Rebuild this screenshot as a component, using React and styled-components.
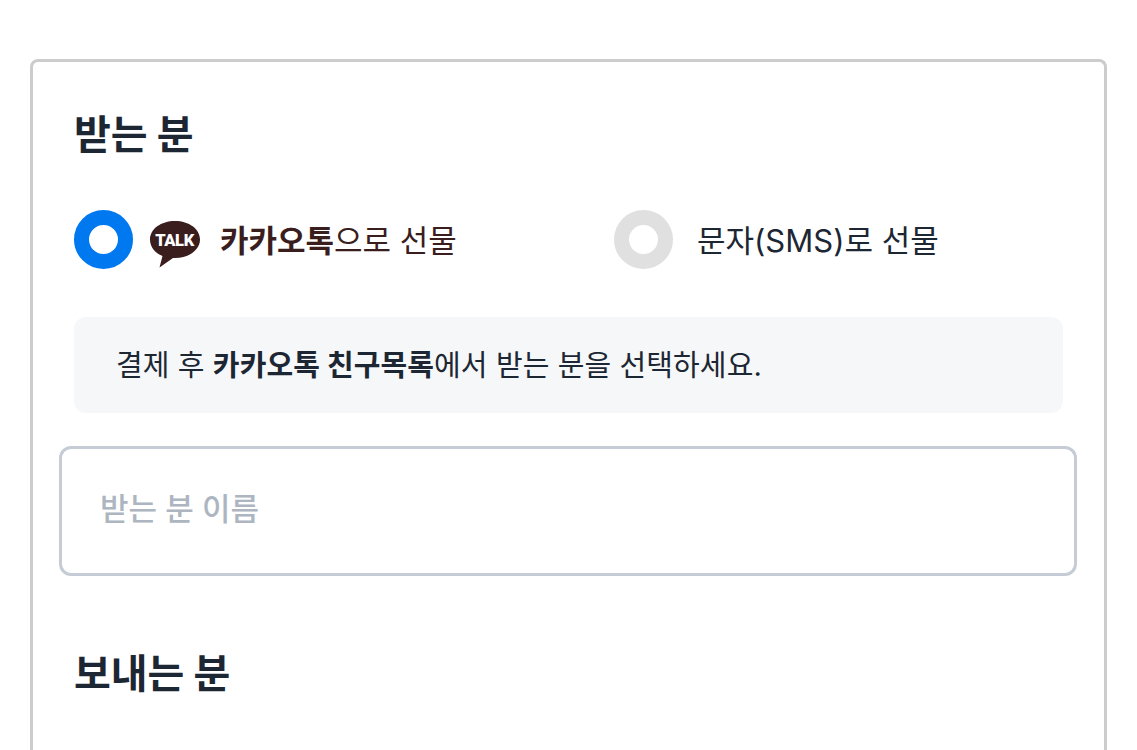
import React, { useState } from "react";
import styled, { createGlobalStyle } from "styled-components";

const Global = createGlobalStyle`
  html, body {
    margin: 0;
    height: 100%;
    overflow: hidden;
    background: #fff;
  }
  body {
    font-family: "Inter", "Noto Sans CJK KR", sans-serif;
    color: #1c2733;
  }
`;

const Page = styled.main`
  height: 750px;
  overflow: hidden;
  padding: 59px 30px 0;
  box-sizing: border-box;
`;

const Card = styled.section`
  width: 1077px;
  box-sizing: border-box;
  height: 691px;
  padding: 41px 41px 0;
  border: 3px solid #cccccc;
  border-bottom: 0;
  border-radius: 8px 8px 0 0;
`;

const Title = styled.h2`
  margin: ${(props) => props.$top || 0}px 0 0;
  font-size: 40px;
  line-height: 64px;
  font-weight: 700;
  letter-spacing: -0.1px;
  color: #1c2733;
`;

const Options = styled.div`
  display: grid;
  grid-template-columns: 540px 1fr;
  margin-top: 43px;
`;

const Option = styled.label`
  display: flex;
  align-items: center;
  height: 59px;
  cursor: pointer;
`;

const Radio = styled.span`
  flex: none;
  width: 59px;
  height: 59px;
  box-sizing: border-box;
  border-radius: 50%;
  border: 15px solid ${(props) => (props.$on ? "#0078f0" : "#e0e0e0")};
  margin-right: ${(props) => props.$gap}px;
  background: #fff;
`;

const KakaoIcon = styled.svg`
  flex: none;
  width: 52px;
  height: 48px;
  margin-right: 19px;
  margin-top: 8px;
`;

const OptionText = styled.span`
  font-size: 31px;
  padding-bottom: 2px;
  color: ${(props) => (props.$kakao ? "#3a1d1d" : "#1c2733")};
  strong {
    font-weight: 700;
  }
`;

const Notice = styled.p`
  margin: 48px 0 0;
  height: 96px;
  box-sizing: border-box;
  display: flex;
  align-items: center;
  padding: 0 0 4px 42px;
  border-radius: 12px;
  background: #f6f7f9;
  font-size: 29px;
  letter-spacing: 0.1px;
  strong {
    font-weight: 700;
    white-space: pre;
  }
`;

const NameInput = styled.input`
  display: block;
  box-sizing: border-box;
  width: calc(100% + 29px);
  height: 130px;
  margin: 33px 0 0 -15px;
  padding: 0 38px 6px;
  border: 3px solid #c5ccd6;
  border-radius: 12px;
  outline: none;
  background: #fff;
  font-family: inherit;
  font-size: 31px;
  font-weight: 500;
  color: #1c2733;
  &::placeholder {
    color: #adb5c0;
    opacity: 1;
  }
`;

export default function App() {
  const [method, setMethod] = useState("kakao");
  const [name, setName] = useState("");
  return (
    <Page>
      <Global />
      <Card>
        <Title>받는 분</Title>
        <Options>
          <Option onClick={() => setMethod("kakao")}>
            <Radio $on={method === "kakao"} $gap={16} />
            <KakaoIcon viewBox="0 0 52 48">
              <path
                fill="#3a1d1d"
                d="M26 1C12 1 1 9 1 19.500C1 27 6 33 13.500 36L10.500 47.500L24 38C24.700 38 25.300 38 26 38C40 38 51 29.800 51 19.500C51 9 40 1 26 1Z"
              />
              <text
                x="25.500"
                y="25.500"
                textAnchor="middle"
                fill="#fff"
                fontFamily="Roboto, sans-serif"
                fontWeight="900"
                fontSize="16.500"
                letterSpacing="-0.400"
              >
                TALK
              </text>
            </KakaoIcon>
            <OptionText $kakao>
              <strong>카카오톡</strong>으로 선물
            </OptionText>
          </Option>
          <Option onClick={() => setMethod("sms")}>
            <Radio $on={method === "sms"} $gap={24} />
            <OptionText>문자(SMS)로 선물</OptionText>
          </Option>
        </Options>
        <Notice>
          결제 후&nbsp;<strong>카카오톡 친구목록</strong>에서 받는 분을 선택하세요.
        </Notice>
        <NameInput
          placeholder="받는 분 이름"
          value={name}
          onChange={(e) => setName(e.target.value)}
        />
        <Title $top={66}>보내는 분</Title>
      </Card>
    </Page>
  );
}
